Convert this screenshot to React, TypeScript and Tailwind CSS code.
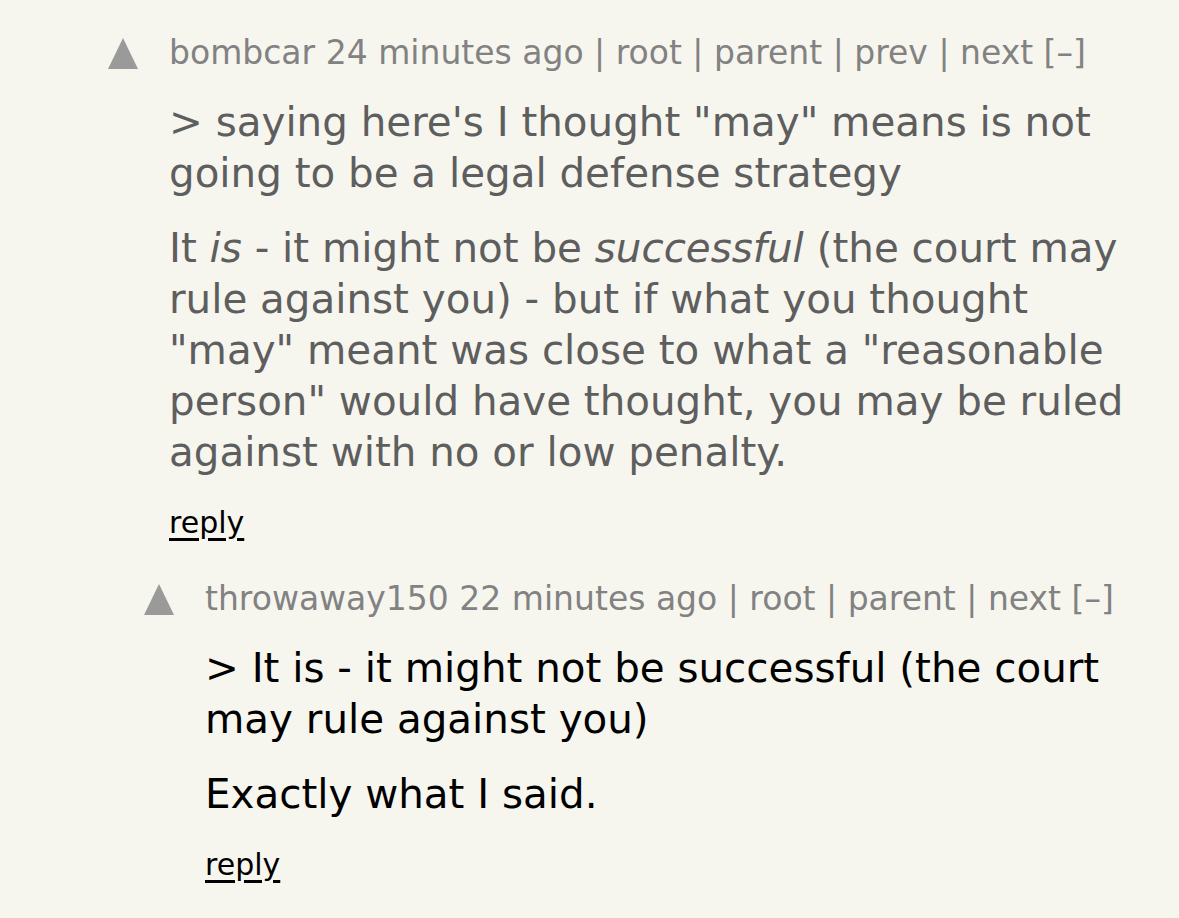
import React from 'react'

function Upvote() {
  return (
    <svg viewBox="0 0 30 31" className="h-[31px] w-[30px] shrink-0">
      <polygon points="15,0 30,31 0,31" fill="#9a9a9a" />
    </svg>
  )
}

function Comment({
  user,
  age,
  links,
  dim,
  children,
}: {
  user: string
  age: string
  links: string[]
  dim?: boolean
  children: React.ReactNode
}) {
  return (
    <div className="flex">
      <div className="w-[61px] shrink-0 pt-[5px]">
        <Upvote />
      </div>
      <div className="flex-1">
        <div className="text-[33px] leading-[40px] text-[#828282]">
          {user} {age}
          {links.map((l) => (
            <span key={l}> | {l}</span>
          ))}{' '}
          [–]
        </div>
        <div className={`mt-[24px] text-[40.4px] leading-[51px] ${dim ? 'text-[#5e5e5e]' : 'text-black'}`}>
          {children}
        </div>
        <div className="mt-[25px] text-[30px] leading-[40px] text-black underline underline-offset-[5px]">reply</div>
      </div>
    </div>
  )
}

export default function App() {
  return (
    <div className="min-h-screen bg-[#f6f6ef] pl-[108px] pr-[40px] pt-[33px]" style={{ fontFamily: '"DejaVu Sans", Verdana, sans-serif' }}>
      <Comment user="bombcar" age="24 minutes ago" links={['root', 'parent', 'prev', 'next']} dim>
        <p>&gt; saying here's I thought "may" means is not going to be a legal defense strategy</p>
        <p className="mt-[24px]">
          It <i>is</i> - it might not be <i>successful</i> (the court may rule against you) - but if what you thought
          "may" meant was close to what a "reasonable person" would have thought, you may be ruled against with no or
          low penalty.
        </p>
      </Comment>
      <div className="mt-[36px] pl-[36px]">
        <Comment user="throwaway150" age="22 minutes ago" links={['root', 'parent', 'next']}>
          <p>&gt; It is - it might not be successful (the court may rule against you)</p>
          <p className="mt-[24px]">Exactly what I said.</p>
        </Comment>
      </div>
    </div>
  )
}
